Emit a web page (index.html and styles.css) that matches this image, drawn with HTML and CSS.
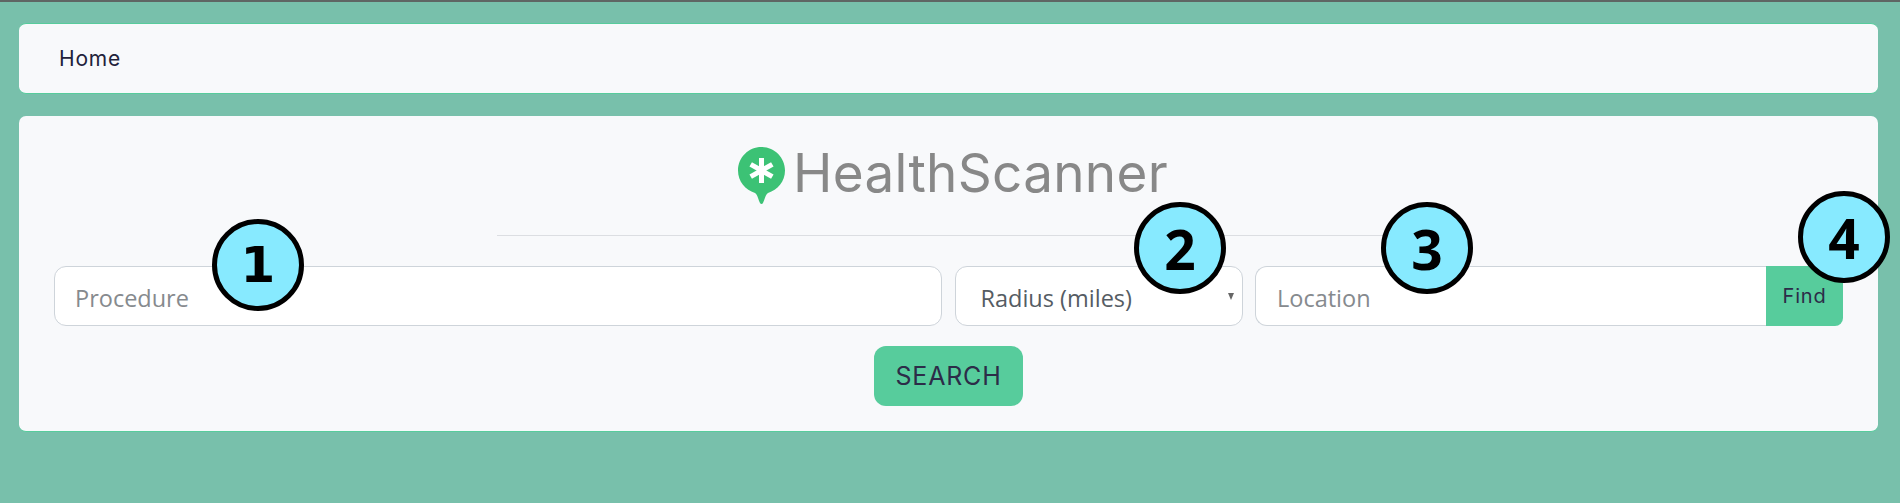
FILE: index.html
```html
<!DOCTYPE html>
<html lang="en">

<head>
  <meta charset="UTF-8">
  <title>HealthScanner</title>
  <link rel="stylesheet" href="styles.css">
</head>

<body>

  <nav class="navbar">
    <a class="navbar__link" href="#">Home</a>
  </nav>

  <main class="card">
    <div class="logo">
      <svg class="logo__pin" viewBox="0 0 47 57" width="47" height="57">
        <path fill="#3cc275" d="M23.5 0C36.5 0 47 10.5 47 23.5C47 34.5 39.5 43 30 46C27.5 47.5 26.5 53 25 56C24.3 57.3 22.7 57.3 22 56C20.5 53 19.5 47.5 17 46C7.5 43 0 34.5 0 23.5C0 10.5 10.5 0 23.5 0Z"/>
        <g stroke="#fff" stroke-width="5">
          <path d="M23.5 11V36"/>
          <path d="M12.7 17.3L34.3 29.7"/>
          <path d="M34.3 17.3L12.7 29.7"/>
        </g>
      </svg>
      <span class="logo__name">HealthScanner</span>
    </div>

    <hr class="divider">

    <form class="search-form">
      <div class="search-form__row">
        <input class="field field--procedure" type="text" placeholder="Procedure">
        <div class="select-wrap">
          <select class="field field--select">
            <option>Radius (miles)</option>
          </select>
        </div>
        <div class="location-group">
          <input class="field field--location" type="text" placeholder="Location">
          <button class="location-group__btn" type="button">Find</button>
        </div>
      </div>
      <button class="search-btn" type="button">SEARCH</button>
    </form>
  </main>

  <span class="badge badge--one">1</span>
  <span class="badge badge--two">2</span>
  <span class="badge badge--three">3</span>
  <span class="badge badge--four">4</span>

</body>

</html>
```

FILE: styles.css
```css
html, body {
  margin: 0;
  height: 100%;
  overflow: hidden;
}

body {
  position: relative;
  box-sizing: border-box;
  height: 503px;
  padding: 21px 22px 0 19px;
  background: #78c0ab;
  border-top: 2px solid #5f6664;
  font-family: "Open Sans", "Noto Sans", sans-serif;
}

.navbar {
  display: flex;
  align-items: center;
  box-sizing: border-box;
  height: 71px;
  padding: 0 40px;
  background: #f8f9fb;
  border-bottom: 1px solid #57cc9c;
  border-top: 1px solid #57cc9c;
  border-radius: 7px;
}

.navbar__link {
  font-family: Inter, sans-serif;
  font-size: 21px;
  font-weight: 400;
  letter-spacing: 0.8px;
  color: #22223a;
  text-decoration: none;
}

.card {
  box-sizing: border-box;
  height: 316px;
  margin-top: 22px;
  padding: 31px 35px 0;
  background: #f8f9fb;
  border-bottom: 1px solid #57cc9c;
  border-radius: 7px;
}

.logo {
  display: flex;
  justify-content: center;
  align-items: flex-start;
  gap: 8px;
  height: 57px;
  padding-left: 9px;
}

.logo__pin {
  flex: none;
}

.logo__name {
  font-family: Inter, sans-serif;
  font-size: 53px;
  font-weight: 400;
  letter-spacing: 0.3px;
  line-height: 53px;
  color: #888888;
}

.divider {
  width: 904px;
  margin: 31px auto 30px;
  border: 0;
  border-top: 1px solid #dcdee2;
}

.search-form__row {
  display: flex;
  gap: 12.5px;
}

.field {
  box-sizing: border-box;
  height: 60px;
  margin: 0;
  background: #fff;
  border: 1px solid #ced4da;
  border-radius: 12px;
  font-family: "Open Sans", "Noto Sans", sans-serif;
  font-size: 23.5px;
  color: #555c63;
  outline: none;
}

.field::placeholder {
  color: #868a8e;
  opacity: 1;
}

.field--procedure {
  width: 888px;
  padding: 3px 20px 0;
}

.select-wrap {
  position: relative;
  width: 288px;
}

.select-wrap::after {
  content: "";
  position: absolute;
  top: 27px;
  right: 9px;
  border-top: 7px solid #666;
  border-left: 3.5px solid transparent;
  border-right: 3.5px solid transparent;
}

.field--select {
  width: 100%;
  padding: 3px 25px 0;
  appearance: none;
}

.location-group {
  display: flex;
  width: 588px;
}

.field--location {
  flex: 1;
  min-width: 0;
  padding: 3px 21px 0;
  border-right: 0;
  border-radius: 12px 0 0 12px;
}

.location-group__btn {
  width: 77px;
  height: 60px;
  padding: 0;
  background: #57cc9c;
  border: 0;
  border-radius: 0 0 8px 0;
  font-family: Inter, sans-serif;
  font-size: 20px;
  font-weight: 400;
  letter-spacing: 0.8px;
  color: #2c2c48;
}

.search-btn {
  display: block;
  width: 149px;
  height: 60px;
  margin: 20px auto 0;
  padding: 0;
  background: #57cc9c;
  border: 0;
  border-radius: 12px;
  font-family: Inter, sans-serif;
  font-size: 25px;
  font-weight: 400;
  letter-spacing: 0.8px;
  color: #2c2c48;
}

/* numbered callouts pasted over the form */
.badge {
  position: absolute;
  display: flex;
  justify-content: center;
  align-items: center;
  box-sizing: border-box;
  width: 92px;
  height: 92px;
  background: #87eaff;
  border: 5px solid #000;
  border-radius: 50%;
  font-family: "Open Sans", sans-serif;
  font-size: 55px;
  font-weight: 700;
  color: #000;
}

/* open sans has no foot on the 1 */
.badge--one {
  left: 212px;
  top: 217px;
  font-family: "DejaVu Sans", sans-serif;
  font-size: 50px;
}

.badge--two {
  left: 1134px;
  top: 200px;
}

.badge--three {
  left: 1381px;
  top: 200px;
}

.badge--four {
  left: 1798px;
  top: 189px;
}
```
